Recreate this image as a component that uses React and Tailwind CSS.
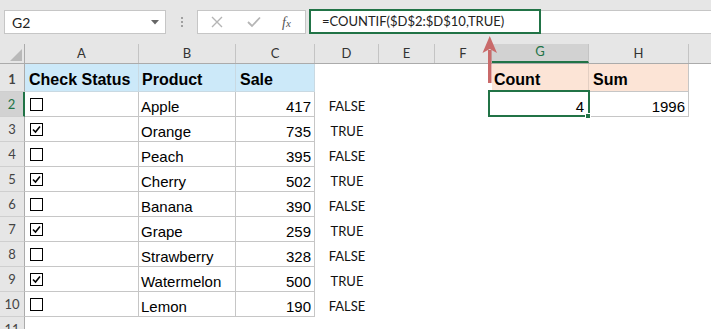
import React from "react";

const cols = [
  { key: "A", w: "w-[114px]" },
  { key: "B", w: "w-[97px]" },
  { key: "C", w: "w-[79px]" },
  { key: "D", w: "w-[64px]" },
  { key: "E", w: "w-[56px]" },
  { key: "F", w: "w-[57px]" },
  { key: "G", w: "w-[97px]" },
  { key: "H", w: "w-[100px]" },
];

const data = [
  { n: 2, chk: false, p: "Apple", s: 417 },
  { n: 3, chk: true, p: "Orange", s: 735 },
  { n: 4, chk: false, p: "Peach", s: 395 },
  { n: 5, chk: true, p: "Cherry", s: 502 },
  { n: 6, chk: false, p: "Banana", s: 390 },
  { n: 7, chk: true, p: "Grape", s: 259 },
  { n: 8, chk: false, p: "Strawberry", s: 328 },
  { n: 9, chk: true, p: "Watermelon", s: 500 },
  { n: 10, chk: false, p: "Lemon", s: 190 },
];

const uiFont = "font-['Lato','Liberation_Sans',sans-serif]";
const cellFont = "font-['Liberation_Sans',Arial,sans-serif]";

function Checkbox({ checked }) {
  return (
    <div className="w-[13px] h-[13px] border border-black bg-white flex items-center justify-center">
      {checked && (
        <svg width="9" height="9" viewBox="0 0 9 9">
          <path d="M1 4.5 L3.5 7 L8 1.5" fill="none" stroke="black" strokeWidth="1.6" />
        </svg>
      )}
    </div>
  );
}

function RowHead({ n, selected, h = "h-[25px]" }) {
  return (
    <div
      className={`w-[25px] shrink-0 ${h} flex items-end justify-center pb-[5px] leading-none text-[13px] ${uiFont} border-b border-[#cfcfcf] ${
        selected
          ? "bg-[#d2d2d2] text-[#217346] border-r-2 border-r-[#217346]"
          : "bg-[#e6e6e6] text-[#444] border-r border-r-[#ababab]"
      }`}
    >
      {n}
    </div>
  );
}

export default function App() {
  return (
    <div className="relative w-[711px] h-[329px] overflow-hidden bg-white">
      {/* formula bar */}
      <div className="h-[44px] bg-[#e6e6e6] flex items-start pt-[10px]">
        <div className={`ml-[4px] w-[162px] h-[24px] bg-white border border-[#c6c6c6] flex items-center justify-between pl-[7px] pr-[6px] text-[14px] text-[#222] ${uiFont}`}>
          <span>G2</span>
          <svg width="8" height="5" viewBox="0 0 8 5">
            <path d="M0 0 L8 0 L4 4.5 Z" fill="#666" />
          </svg>
        </div>
        <div className="w-[31px] h-[24px] flex flex-col items-center justify-center gap-[2px]">
          <div className="w-[2px] h-[2px] bg-[#a0a0a0]" />
          <div className="w-[2px] h-[2px] bg-[#a0a0a0]" />
          <div className="w-[2px] h-[2px] bg-[#a0a0a0]" />
        </div>
        <div className="w-[109px] h-[24px] bg-white border border-[#c6c6c6] flex items-center">
          <svg className="ml-[13px]" width="12" height="12" viewBox="0 0 12 12">
            <path d="M1 1 L11 11 M11 1 L1 11" stroke="#b5b5b5" strokeWidth="1.4" />
          </svg>
          <svg className="ml-[24px]" width="14" height="12" viewBox="0 0 14 12">
            <path d="M1 6 L5 10 L13 1.5" fill="none" stroke="#b5b5b5" strokeWidth="1.8" />
          </svg>
          <span className="ml-[21px] text-[14px] italic text-[#555] font-['Liberation_Serif',serif]">
            f<span className="text-[11px]">x</span>
          </span>
        </div>
        <div className={`ml-[3px] -mt-[1px] w-[232px] h-[25px] bg-white border-2 border-[#217346] flex items-center pl-[11px] text-[13px] text-[#222] ${uiFont}`}>
          =COUNTIF($D$2:$D$10,TRUE)
        </div>
        <div className="flex-1 h-[24px] bg-white border-y border-[#c6c6c6]" />
      </div>

      {/* column headers */}
      <div className={`flex h-[20px] bg-[#e6e6e6] border-b border-[#ababab] text-[13px] leading-none ${uiFont}`}>
        <div className="w-[25px] shrink-0 border-r border-[#ababab] flex items-end justify-end p-[2px]">
          <svg width="12" height="12" viewBox="0 0 12 12">
            <path d="M12 0 L12 12 L0 12 Z" fill="#b9b9b9" />
          </svg>
        </div>
        {cols.map((c) => (
          <div
            key={c.key}
            className={`${c.w} shrink-0 flex items-end justify-center pb-[3px] border-r border-[#c4c4c4] ${
              c.key === "G"
                ? "bg-[#d2d2d2] text-[#217346] border-b-2 border-b-[#217346]"
                : "text-[#333]"
            }`}
          >
            {c.key}
          </div>
        ))}
        <div className="flex-1" />
      </div>

      {/* row 1 */}
      <div className={`flex h-[28px] text-[16px] leading-none font-bold text-black ${cellFont}`}>
        <RowHead n={1} h="h-[28px]" />
        <div className="w-[114px] shrink-0 bg-[#cce9f9] border-r border-b border-[#c9d9e2] flex items-end pl-[4px] pb-[3px]">Check Status</div>
        <div className="w-[97px] shrink-0 bg-[#cce9f9] border-r border-b border-[#c9d9e2] flex items-end pl-[3px] pb-[3px]">Product</div>
        <div className="w-[79px] shrink-0 bg-[#cce9f9] border-r border-b border-[#c9d9e2] flex items-end pl-[4px] pb-[3px]">Sale</div>
        <div className="w-[64px] shrink-0" />
        <div className="w-[56px] shrink-0" />
        <div className="w-[57px] shrink-0" />
        <div className="w-[97px] shrink-0 bg-[#fce4d6] border-r border-b border-[#e3cfc3] flex items-end pl-[2px] pb-[3px]">Count</div>
        <div className="w-[100px] shrink-0 bg-[#fce4d6] border-r border-b border-[#c6c6c6] flex items-end pl-[4px] pb-[3px]">Sum</div>
      </div>

      {/* data rows */}
      {data.map((r) => (
        <div key={r.n} className={`flex h-[25px] text-[15px] leading-none text-black ${cellFont}`}>
          <RowHead n={r.n} selected={r.n === 2} />
          <div className="w-[114px] shrink-0 border-r border-b border-[#c6c6c6] flex items-center pl-[5px] pt-[1px]">
            <Checkbox checked={r.chk} />
          </div>
          <div className="w-[97px] shrink-0 border-r border-b border-[#c6c6c6] flex items-end pl-[2px] pb-[2px]">{r.p}</div>
          <div className="w-[79px] shrink-0 border-r border-b border-[#c6c6c6] flex items-end justify-end pr-[3px] pb-[2px]">{r.s}</div>
          <div className={`w-[64px] shrink-0 flex items-end justify-center pb-[4px] text-[13px] text-[#111] ${uiFont}`}>
            {r.chk ? "TRUE" : "FALSE"}
          </div>
          <div className="w-[56px] shrink-0" />
          <div className="w-[57px] shrink-0" />
          {r.n === 2 && (
            <>
              <div className="relative w-[97px] shrink-0 border-r border-b border-[#c6c6c6] flex items-end justify-end pr-[4px] pb-[2px]">
                4
                <div className="absolute -left-[4px] -top-[2px] w-[102px] h-[27px] border-2 border-[#217346]" />
                <div className="absolute -right-[3px] -bottom-[3px] w-[6px] h-[6px] bg-[#217346] border border-white" />
              </div>
              <div className="w-[100px] shrink-0 border-r border-b border-[#c6c6c6] flex items-end justify-end pr-[3px] pb-[2px]">1996</div>
            </>
          )}
        </div>
      ))}

      {/* row 11 */}
      <div className="flex h-[25px]">
        <RowHead n={11} />
      </div>

      {/* pointer arrow */}
      <svg className="absolute left-[481px] top-[36px]" width="18" height="48" viewBox="0 0 18 48">
        <path d="M7 14 L7 47 L10.5 47 L10.5 14 Z" fill="#c96a6a" />
        <path d="M8.75 0 L1.5 17 L8.75 13 L16 17 Z" fill="#c96a6a" />
      </svg>
    </div>
  );
}
